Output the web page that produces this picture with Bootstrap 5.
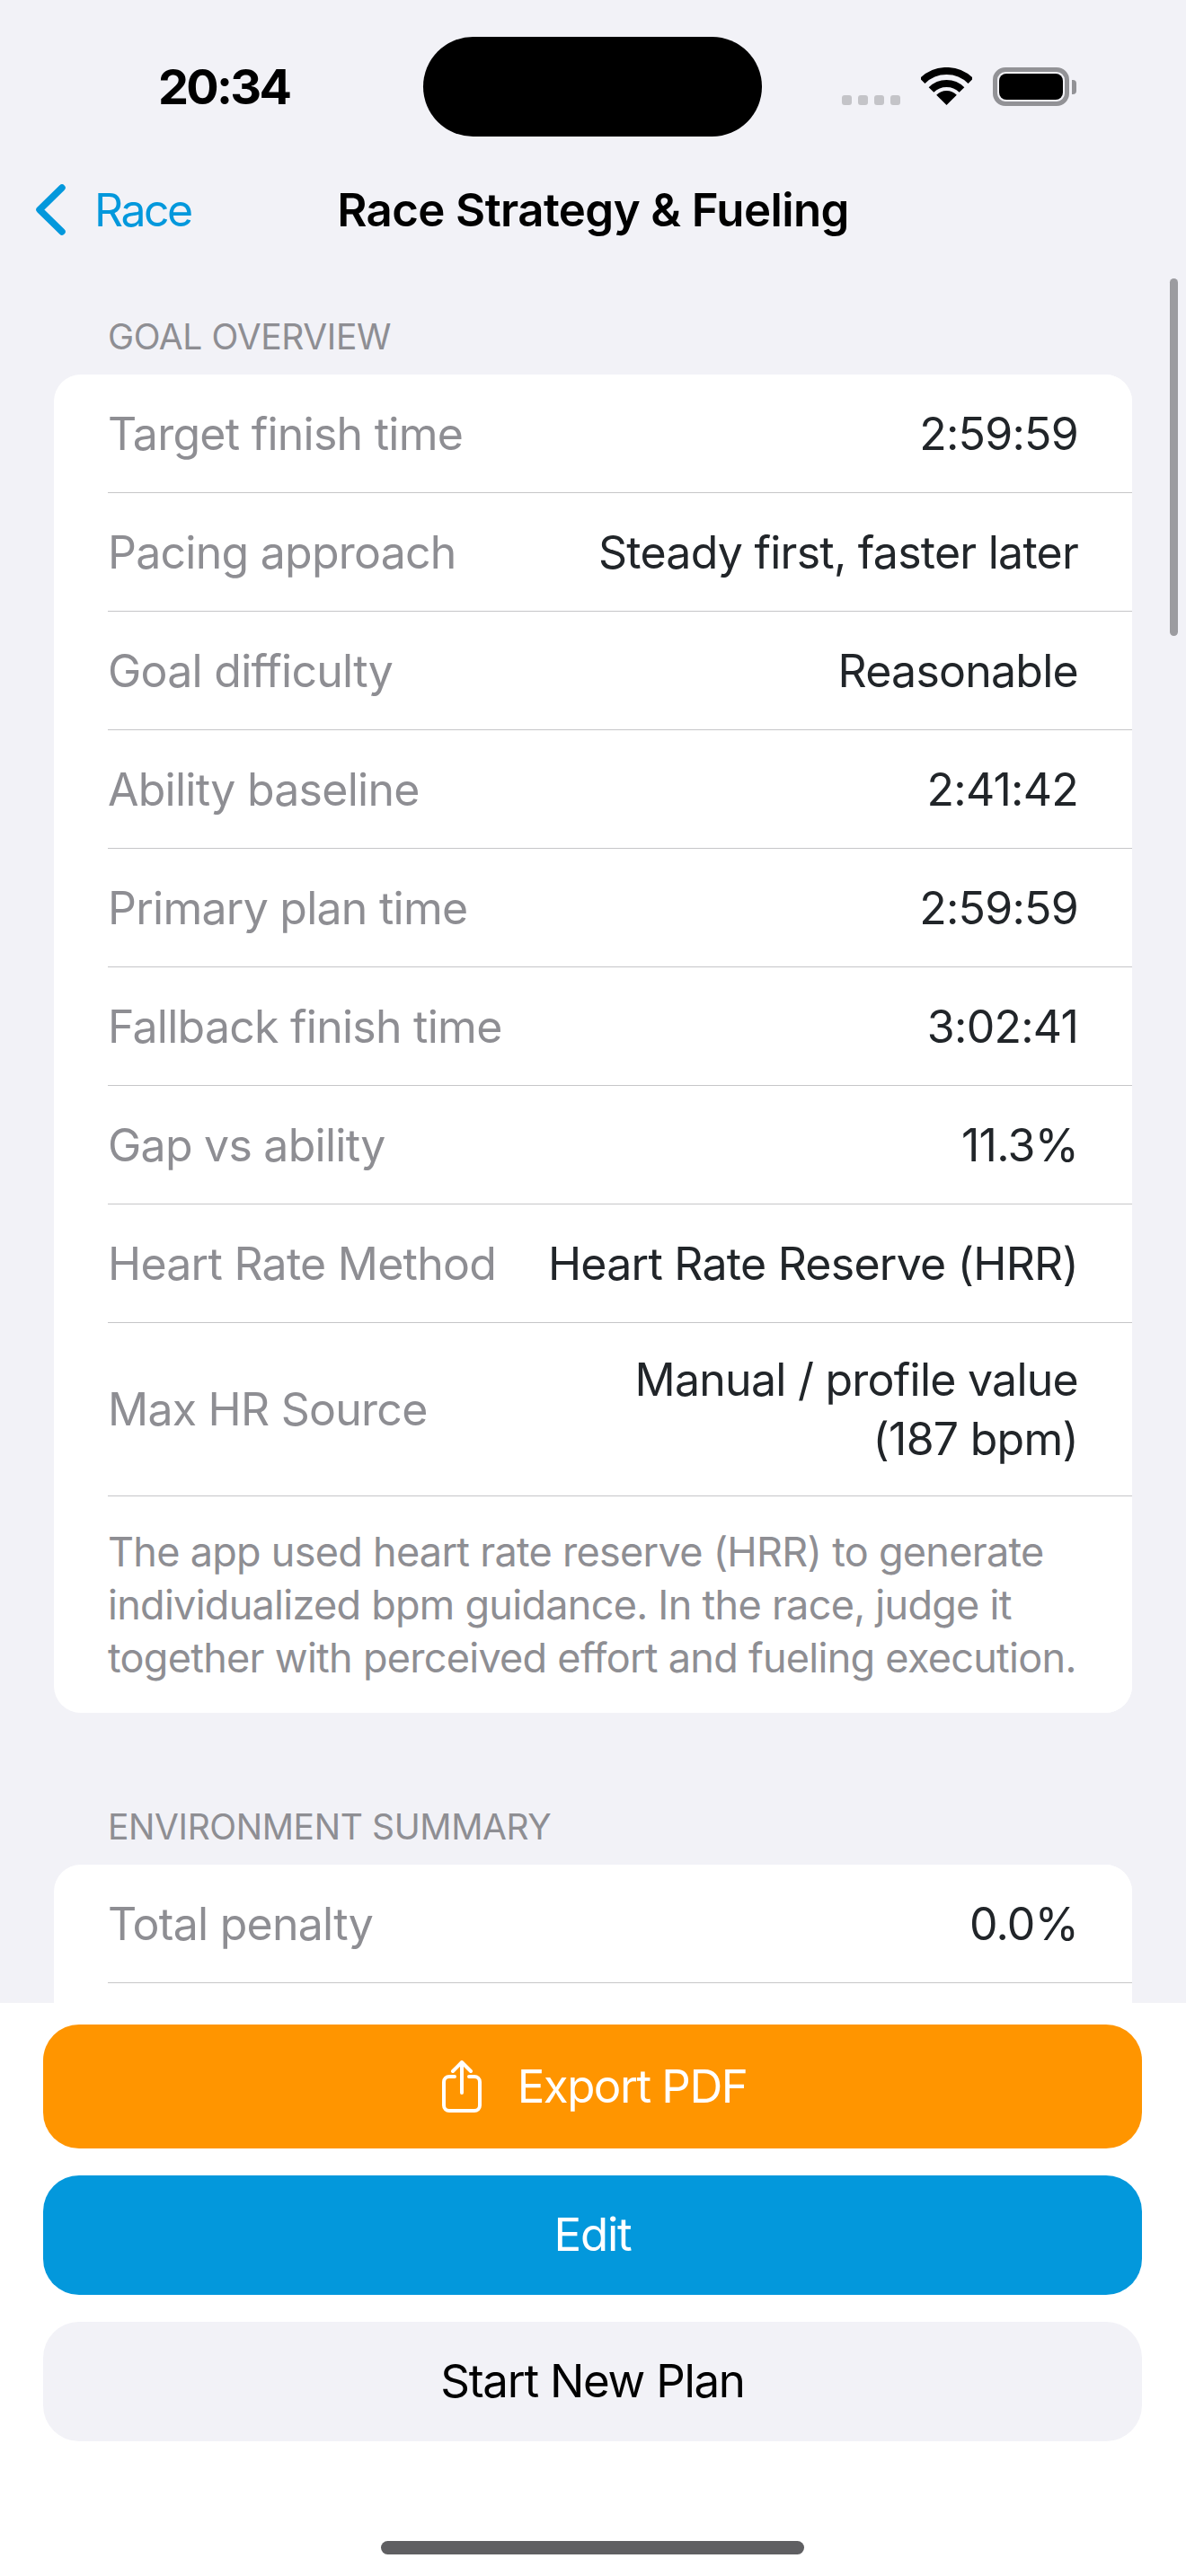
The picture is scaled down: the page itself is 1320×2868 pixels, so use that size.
<!DOCTYPE html>
<html lang="en">
<head>
  <meta charset="UTF-8">
  <meta name="viewport" content="width=device-width, initial-scale=1">
  <title>Race Strategy & Fueling</title>
  <link href="https://cdn.jsdelivr.net/npm/bootstrap@5.3.0/dist/css/bootstrap.min.css" rel="stylesheet">
  <style>
    html, body { height: 100%; overflow: hidden; }
    body {
      font-family: Inter, "Liberation Sans", sans-serif;
      background-color: #f2f2f7;
      color: #000;
    }
    .phone { height: 2868px; }
    .status-bar { height: 168px; padding: 41px 122px 0 176px; }
    .clock { font-size: 54px; font-weight: 700; line-height: 111px; width: 295px; letter-spacing: -0.05em; }
    .island { width: 377px; height: 111px; border-radius: 56px; background: #000; }
    .status-icons { margin-left: 89px; height: 111px; padding-top: 34px; }
    .signal-dots { gap: 7px; margin-top: 31px; margin-right: 23px; }
    .signal-dots span { width: 11px; height: 11px; border-radius: 3px; background: #c4c4c8; }
    .battery { width: 85px; height: 43px; margin-left: 23px; border: 5px solid #929296; border-radius: 14px; padding: 2px; }
    .battery span { display: block; height: 100%; background: #000; border-radius: 8px; }
    .battery-cap { width: 5px; height: 16px; margin: 14px 0 0 3px; background: #929296; border-radius: 0 4px 4px 0; }
    .top-nav { height: 132px; }
    .back-link { left: 40px; top: 0; height: 132px; color: #0398dc; font-size: 50px; text-decoration: none; gap: 31px; letter-spacing: -0.05em; }
    .nav-title { font-size: 51px; font-weight: 600; letter-spacing: -0.012em; }
    .scroll-area { min-height: 0; overflow: hidden; padding: 0 60px; }
    .scroll-thumb { right: 9px; top: 310px; width: 9px; height: 398px; border-radius: 5px; background: #9c9ca0; }
    .section-label { font-size: 39px; line-height: 50px; color: #8e8e93; padding: 50px 60px 17px; letter-spacing: -0.01em; }
    .group-box { border-radius: 30px; background: #fff; border: 0; margin-bottom: 52px; }
    .group-box .list-group-item { margin-left: 60px; padding: 0 60px 0 0; min-height: 132px; border-width: 0 0 1.5px; border-color: #c6c6c8; font-size: 50px; line-height: 66px; letter-spacing: -0.015em; }
    .row-label { color: #8e8e93; flex-shrink: 0; }
    .row-value { padding: 30px 0; }
    .group-box .list-group-item.row-note { font-size: 45px; line-height: 59px; letter-spacing: -0.016em; color: #8e8e93; padding: 32px 20px 32px 0; }
    .page-footer { height: 638px; background: #fff; padding: 24px 49px 24px 48px; }
    .button-stack { gap: 30px; }
    .action-btn { height: 133px; border-radius: 40px; border: 0; font-size: 51px; gap: 40px; letter-spacing: -0.025em; }
    .action-orange, .action-orange:hover { height: 138px; background: #ff9500; color: #fff; letter-spacing: -0.03em; padding-left: 16px; }
    .action-blue, .action-blue:hover { background: #0398dc; color: #fff; }
    .action-grey, .action-grey:hover { background: #f2f2f7; color: #000; }
    .home-bar { width: 471px; height: 15px; border-radius: 8px; background: #5f5f62; margin: 111px auto 0; }
  </style>
</head>
<body>

<div class="phone d-flex flex-column position-relative">
  <div class="status-bar d-flex flex-shrink-0">
    <div class="clock">20:34</div>
    <div class="island"></div>
    <div class="status-icons d-flex align-items-start">
      <div class="signal-dots d-flex"><span></span><span></span><span></span><span></span></div>
      <svg width="57" height="42" viewBox="0 0 57 42">
        <path d="M1.6 15.1 A38 38 0 0 1 55.4 15.1" fill="none" stroke="#000" stroke-width="8"/>
        <path d="M11.5 25 A24 24 0 0 1 45.5 25" fill="none" stroke="#000" stroke-width="8"/>
        <path d="M28.5 42 L17.2 30.7 A16 16 0 0 1 39.8 30.7 Z" fill="#000"/>
      </svg>
      <div class="battery"><span></span></div>
      <div class="battery-cap"></div>
    </div>
  </div>

  <nav class="top-nav d-flex align-items-center justify-content-center position-relative flex-shrink-0">
    <a class="back-link position-absolute d-flex align-items-center" href="#">
      <svg width="34" height="58" viewBox="0 0 34 58"><path d="M29 4 L4 28.5 L29 53" fill="none" stroke="#0398dc" stroke-width="7.5" stroke-linecap="round" stroke-linejoin="round"/></svg>
      Race
    </a>
    <div class="nav-title">Race Strategy &amp; Fueling</div>
  </nav>

  <main class="scroll-area flex-grow-1">
    <div class="section-label">GOAL OVERVIEW</div>
    <ul class="list-group group-box" id="goalList"></ul>

    <div class="section-label">ENVIRONMENT SUMMARY</div>
    <ul class="list-group group-box" id="envList"></ul>
  </main>

  <div class="scroll-thumb position-absolute"></div>

  <footer class="page-footer d-flex flex-column flex-shrink-0">
    <div class="button-stack d-flex flex-column">
      <button class="btn action-btn action-orange d-flex align-items-center justify-content-center" type="button">
        <svg width="44" height="58" viewBox="0 0 44 58" fill="none" stroke="#fff" stroke-width="4" stroke-linecap="round" stroke-linejoin="round">
          <path d="M14 18 H8 A6 6 0 0 0 2 24 V50 A6 6 0 0 0 8 56 H36 A6 6 0 0 0 42 50 V24 A6 6 0 0 0 36 18 H30"/>
          <path d="M22 36 V3 M12 12 L22 2 L32 12"/>
        </svg>
        Export PDF
      </button>
      <button class="btn action-btn action-blue" type="button">Edit</button>
      <button class="btn action-btn action-grey" type="button">Start New Plan</button>
    </div>
    <div class="home-bar"></div>
  </footer>
</div>

<script>
const goalRows = [
  ["Target finish time", "2:59:59"],
  ["Pacing approach", "Steady first, faster later"],
  ["Goal difficulty", "Reasonable"],
  ["Ability baseline", "2:41:42"],
  ["Primary plan time", "2:59:59"],
  ["Fallback finish time", "3:02:41"],
  ["Gap vs ability", "11.3%"],
  ["Heart Rate Method", "Heart Rate Reserve (HRR)"],
  ["Max HR Source", "Manual / profile value<br>(187 bpm)"]
];
const envRows = [["Total penalty", "0.0%"], ["", ""]];

function rowHtml(row) {
  return `<li class="list-group-item d-flex align-items-center justify-content-between">
    <span class="row-label">${row[0]}</span><span class="row-value text-end">${row[1]}</span></li>`;
}
document.getElementById('goalList').innerHTML = goalRows.map(rowHtml).join('') +
  `<li class="list-group-item border-0 row-note">The app used heart rate reserve (HRR) to generate individualized bpm guidance. In the race, judge it together with perceived effort and fueling execution.</li>`;
document.getElementById('envList').innerHTML = envRows.map(rowHtml).join('');
</script>
<script src="https://cdn.jsdelivr.net/npm/bootstrap@5.3.0/dist/js/bootstrap.bundle.min.js"></script>
</body>
</html>
